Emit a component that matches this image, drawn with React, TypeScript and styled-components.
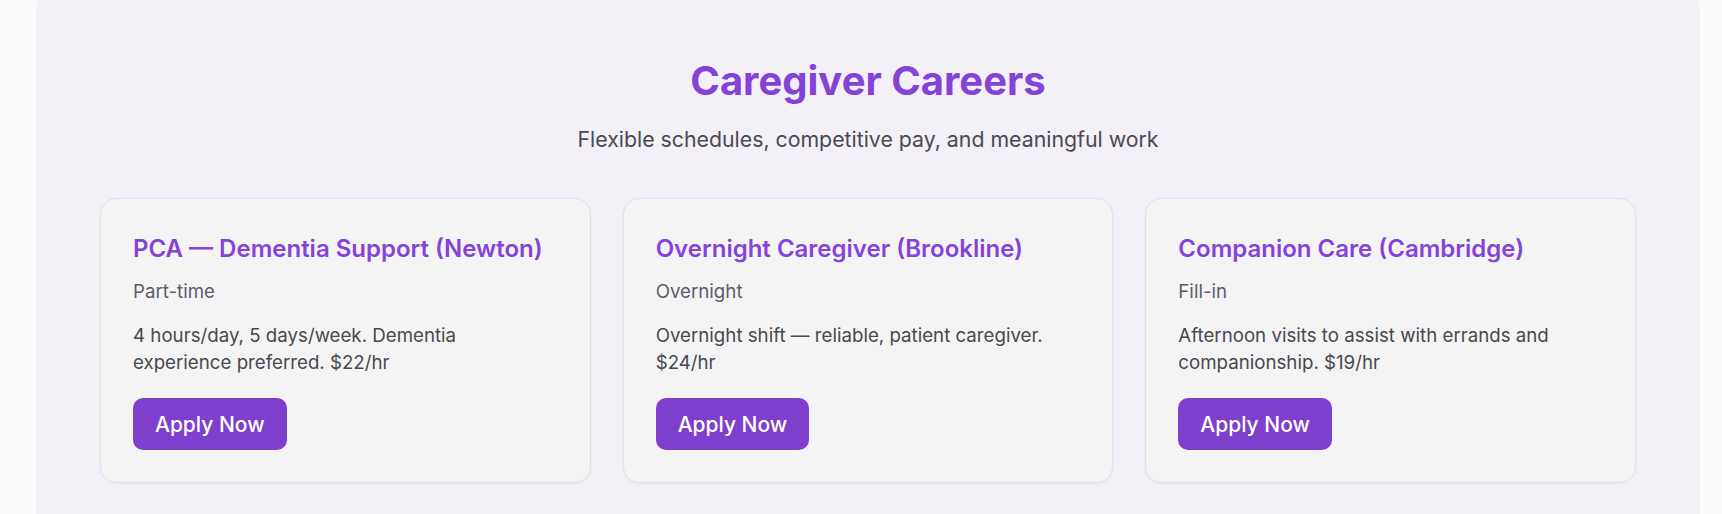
import React from 'react';
import styled, { createGlobalStyle } from 'styled-components';

type Job = {
  id: string;
  title: string;
  type: string;
  description: string;
};

const jobs: Job[] = [
  {
    id: 'newton',
    title: 'PCA — Dementia Support (Newton)',
    type: 'Part-time',
    description: '4 hours/day, 5 days/week. Dementia experience preferred. $22/hr',
  },
  {
    id: 'brookline',
    title: 'Overnight Caregiver (Brookline)',
    type: 'Overnight',
    description: 'Overnight shift — reliable, patient caregiver. $24/hr',
  },
  {
    id: 'cambridge',
    title: 'Companion Care (Cambridge)',
    type: 'Fill-in',
    description: 'Afternoon visits to assist with errands and companionship. $19/hr',
  },
];

const GlobalStyle = createGlobalStyle`
  * {
    box-sizing: border-box;
  }
  body {
    margin: 0;
    background-color: #fafafa;
    font-family: Inter, 'Noto Sans', 'Liberation Sans', sans-serif;
    overflow: hidden;
  }
`;

const App = () => {
  return (
    <>
      <GlobalStyle />
      <Page>
        <Section>
          <Heading>Caregiver Careers</Heading>
          <Subheading>Flexible schedules, competitive pay, and meaningful work</Subheading>
          <CardGrid>
            {jobs.map(job => (
              <Card key={job.id}>
                <JobTitle>{job.title}</JobTitle>
                <JobType>{job.type}</JobType>
                <JobDescription>{job.description}</JobDescription>
                <ApplyButton type="button">Apply Now</ApplyButton>
              </Card>
            ))}
          </CardGrid>
        </Section>
      </Page>
    </>
  );
};

export default App;

const Page = styled.div`
  padding: 0 22px 0 36px;
`;

const Section = styled.section`
  margin-top: -7px;
  padding: 64px 64px 48px;
  background-color: #f3f0f7;
  border-radius: 16px;
`;

const Heading = styled.h2`
  margin: 0 0 19px;
  text-align: center;
  font-size: 40px;
  line-height: 48px;
  font-weight: 700;
  color: #8442d6;
`;

const Subheading = styled.p`
  margin: 0 0 44px;
  text-align: center;
  font-size: 21.3px;
  line-height: 30px;
  color: #4a4a53;
`;

const CardGrid = styled.div`
  display: grid;
  grid-template-columns: repeat(3, 1fr);
  gap: 32px;
`;

const Card = styled.div`
  display: flex;
  flex-direction: column;
  align-items: flex-start;
  padding: 32px;
  background-color: #f4f4f5;
  border: 1px solid #e3e1e7;
  border-radius: 16px;
  box-shadow: 0 1px 3px rgba(20, 10, 40, 0.04);
`;

const JobTitle = styled.h3`
  margin: 0 0 11px;
  font-size: 24px;
  line-height: 36px;
  font-weight: 600;
  color: #8643d8;
`;

const JobType = styled.div`
  margin-bottom: 17px;
  font-size: 18.7px;
  line-height: 27px;
  color: #5c5d6a;
`;

const JobDescription = styled.p`
  margin: 0 0 22px;
  font-size: 18.7px;
  line-height: 27px;
  color: #48484f;
`;

const ApplyButton = styled.button`
  height: 52px;
  padding: 0 22px;
  border: none;
  border-radius: 10px;
  background-color: #7e3fcc;
  color: #ffffff;
  font-family: inherit;
  font-size: 21px;
  font-weight: 500;
  cursor: pointer;
`;
